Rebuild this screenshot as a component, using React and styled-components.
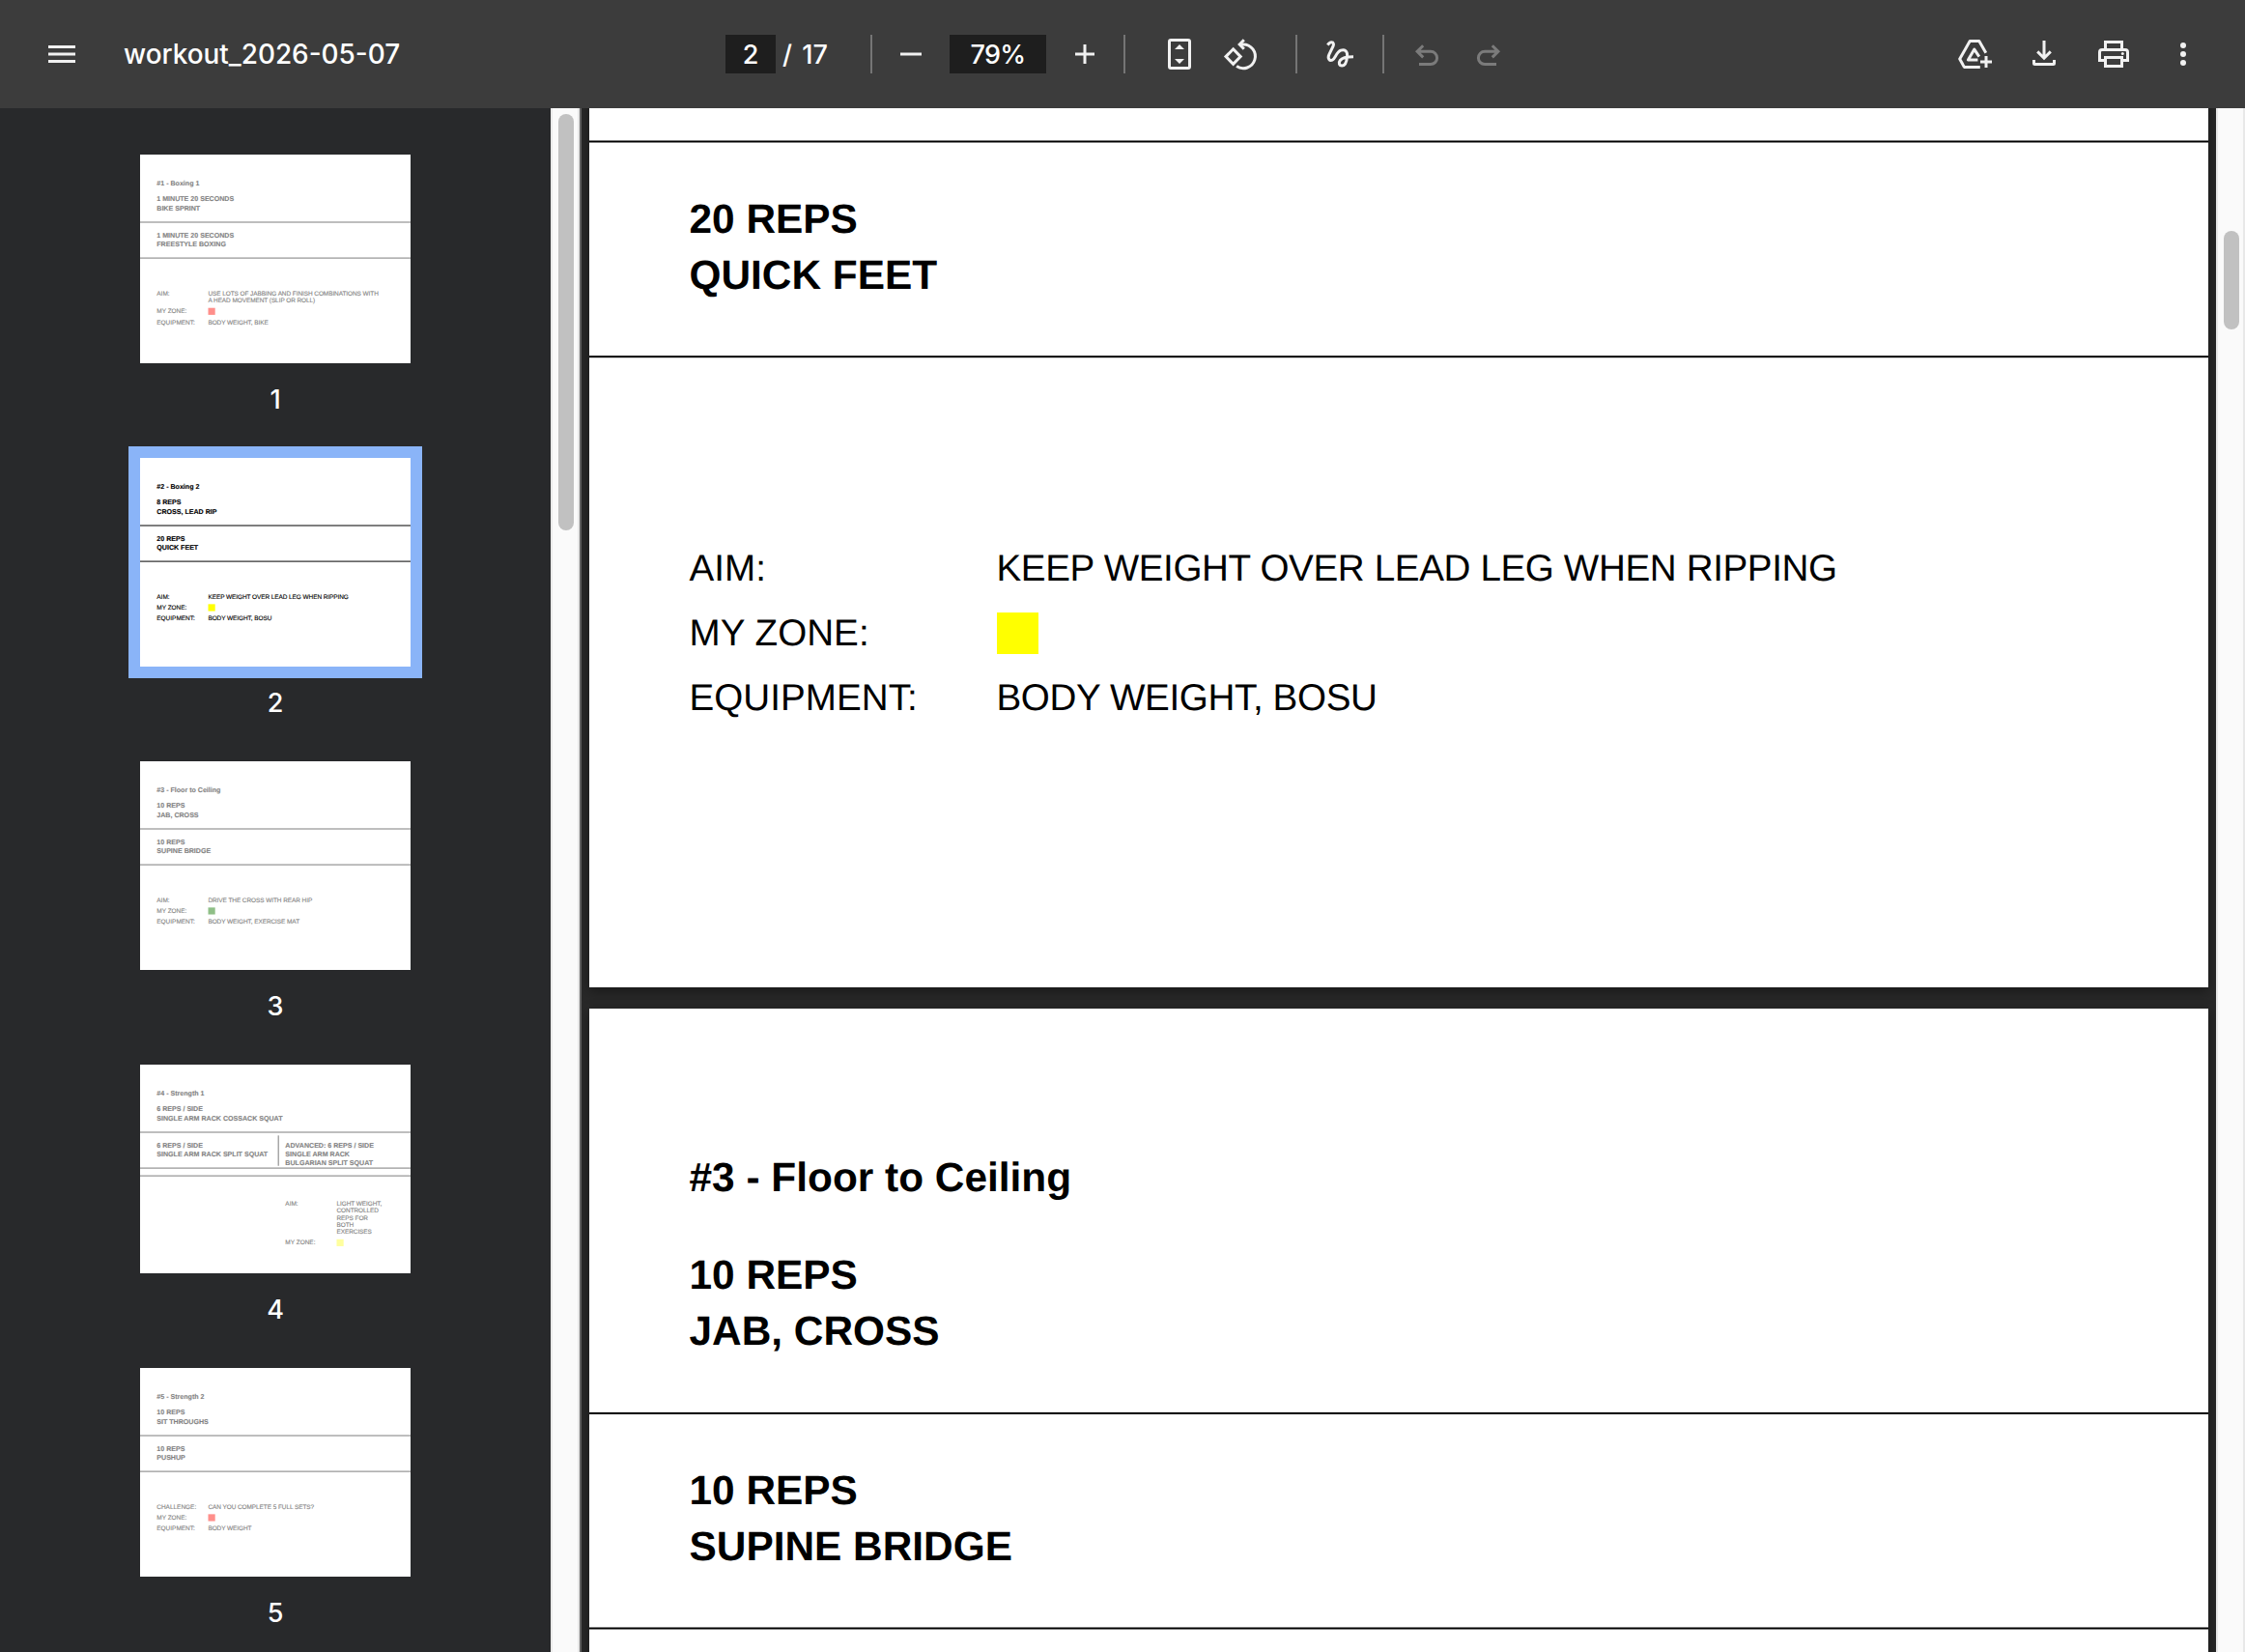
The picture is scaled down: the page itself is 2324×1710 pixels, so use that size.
import React from 'react';
import styled, { createGlobalStyle, css } from 'styled-components';

const PAGE_WIDTH = 1676;
const PAGE_HEIGHT = 1294;
const THUMB_WIDTH = 280;
const THUMB_SCALE = THUMB_WIDTH / PAGE_WIDTH;

const colors = {
  toolbar: '#3c3c3c',
  field: '#1e1e1e',
  sidebar: '#28292b',
  viewer: '#282828',
  active: '#8ab4f8',
  icon: '#f1f1f1',
  iconDisabled: '#7b7b7b',
};

const slides = [
  {
    title: '#1 - Boxing 1',
    main: { reps: '1 MINUTE 20 SECONDS', name: ['BIKE SPRINT'] },
    columns: [{ reps: '1 MINUTE 20 SECONDS', name: ['FREESTYLE BOXING'] }],
    details: [
      { label: 'AIM:', lines: ['USE LOTS OF JABBING AND FINISH COMBINATIONS WITH', 'A HEAD MOVEMENT (SLIP OR ROLL)'] },
      { label: 'MY ZONE:', zone: '#ff2119' },
      { label: 'EQUIPMENT:', lines: ['BODY WEIGHT, BIKE'] },
    ],
  },
  {
    title: '#2 - Boxing 2',
    main: { reps: '8 REPS', name: ['CROSS, LEAD RIP'] },
    columns: [{ reps: '20 REPS', name: ['QUICK FEET'] }],
    details: [
      { label: 'AIM:', lines: ['KEEP WEIGHT OVER LEAD LEG WHEN RIPPING'] },
      { label: 'MY ZONE:', zone: '#ffff00' },
      { label: 'EQUIPMENT:', lines: ['BODY WEIGHT, BOSU'] },
    ],
  },
  {
    title: '#3 - Floor to Ceiling',
    main: { reps: '10 REPS', name: ['JAB, CROSS'] },
    columns: [{ reps: '10 REPS', name: ['SUPINE BRIDGE'] }],
    details: [
      { label: 'AIM:', lines: ['DRIVE THE CROSS WITH REAR HIP'] },
      { label: 'MY ZONE:', zone: '#218111' },
      { label: 'EQUIPMENT:', lines: ['BODY WEIGHT, EXERCISE MAT'] },
    ],
  },
  {
    title: '#4 - Strength 1',
    main: { reps: '6 REPS / SIDE', name: ['SINGLE ARM RACK COSSACK SQUAT'] },
    columns: [
      { reps: '6 REPS / SIDE', name: ['SINGLE ARM RACK SPLIT SQUAT'] },
      { reps: 'ADVANCED: 6 REPS / SIDE', name: ['SINGLE ARM RACK', 'BULGARIAN SPLIT SQUAT'] },
    ],
    details: [
      { label: 'AIM:', lines: ['LIGHT WEIGHT,', 'CONTROLLED', 'REPS FOR', 'BOTH', 'EXERCISES'] },
      { label: 'MY ZONE:', zone: '#ffff3f' },
    ],
  },
  {
    title: '#5 - Strength 2',
    main: { reps: '10 REPS', name: ['SIT THROUGHS'] },
    columns: [{ reps: '10 REPS', name: ['PUSHUP'] }],
    details: [
      { label: 'CHALLENGE:', lines: ['CAN YOU COMPLETE 5 FULL SETS?'] },
      { label: 'MY ZONE:', zone: '#ff2119' },
      { label: 'EQUIPMENT:', lines: ['BODY WEIGHT'] },
    ],
  },
];

/* ---------- icons, all on a 40px grid ---------- */

const Icon = styled.svg.attrs({ viewBox: '0 0 40 40' })`
  display: block;
  width: 40px;
  height: 40px;
  fill: none;
  stroke: currentColor;
  stroke-width: 3;
`;

const MenuIcon = () => (
  <Icon>
    <path d="M6 12.5h28M6 20h28M6 27.5h28" />
  </Icon>
);

const MinusIcon = () => (
  <Icon>
    <path d="M9 20h22" />
  </Icon>
);

const PlusIcon = () => (
  <Icon>
    <path d="M10 20h20M20 10v20" />
  </Icon>
);

const FitIcon = () => (
  <Icon>
    <rect x="9.5" y="5.5" width="21" height="29" rx="1.5" />
    <path d="M15 15l5-5 5 5zM15 25l5 5 5-5z" fill="currentColor" stroke="none" />
  </Icon>
);

const RotateIcon = () => (
  <Icon>
    <path d="M11.6 14.8l7.6 7.8-7.6 7.8L4 22.6z" />
    <path d="M22.8 5.3L18.2 10l4.6 4.7" />
    <path d="M19.5 9.9H22a12.4 12.4 0 1 1-6.9 22.7" />
  </Icon>
);

const DrawIcon = () => (
  <Icon>
    <path d="M8.4 10.6C9.4 9 10.8 7.8 12.4 7.8c2.2 0 2.5 2 1.6 4.2L9.8 20.6c-1.8 4 .6 6.8 3.4 5.6 3-1.3 4-8.2 8.8-10 4-1.4 7 .6 6.6 5.6-.4 5.6-2 10.2-5.4 10.2-3.2 0-3.5-3.3-1.9-5.5 2.1-2.9 5.7-3.8 13.7-3.8" />
  </Icon>
);

const UndoIcon = () => (
  <Icon>
    <path d="M16.2 11.2L10.1 17.3l6.1 6.1M10.1 17.3H24a6.6 6.6 0 0 1 0 13.2H12" />
  </Icon>
);

const RedoIcon = () => (
  <Icon>
    <path d="M23.8 11.2l6.1 6.1-6.1 6.1M29.9 17.3H16a6.6 6.6 0 0 0 0 13.2h12" />
  </Icon>
);

const DriveIcon = () => (
  <Icon strokeLinejoin="round">
    <path d="M31.8 18.8L24.8 6.6h-9.6L4.7 25l4.6 8.4h16.5" />
    <path d="M24.8 22.6l-5-7.5-6.4 10.8h10" />
    <path d="M26 28h12M32 22v12" />
  </Icon>
);

const DownloadIcon = () => (
  <Icon>
    <path d="M20 6v18M13.2 17.4l6.8 6.8 6.8-6.8" />
    <path d="M9.5 26v3.5a1 1 0 0 0 1 1h19a1 1 0 0 0 1-1V26" />
  </Icon>
);

const PrintIcon = () => (
  <Icon>
    <path d="M11.5 15.5v-8h17v8" />
    <path d="M11.5 26.5h-6V18A2.5 2.5 0 0 1 8 15.5h24a2.5 2.5 0 0 1 2.5 2.5v8.5h-6" />
    <rect x="11.5" y="23.5" width="17" height="9" />
    <circle cx="29.3" cy="19.6" r="1.5" fill="currentColor" stroke="none" />
  </Icon>
);

const MoreIcon = () => (
  <Icon>
    <g fill="currentColor" stroke="none">
      <circle cx="20" cy="11" r="3" />
      <circle cx="20" cy="20" r="3" />
      <circle cx="20" cy="29" r="3" />
    </g>
  </Icon>
);

/* ---------- slide ---------- */

function Exercise({ reps, name }) {
  return (
    <ExerciseBlock>
      <BoldLine>{reps}</BoldLine>
      <div>
        {name.map((line) => (
          <BoldLine key={line}>{line}</BoldLine>
        ))}
      </div>
    </ExerciseBlock>
  );
}

function Slide({ slide, ruleWeight = 2, ruleShifts = [0, 0] }) {
  const split = slide.columns.length > 1;

  return (
    <SlideRoot>
      <SlideHeader>
        <BoldLine>{slide.title}</BoldLine>
        <Exercise {...slide.main} />
      </SlideHeader>
      <Rule $weight={ruleWeight} $shift={ruleShifts[0]} />
      <SlideColumns>
        {slide.columns.map((column, index) => (
          <React.Fragment key={column.reps + index}>
            {index > 0 && <ColumnDivider />}
            <SlideColumn $split={split} $first={index === 0}>
              <Exercise {...column} />
            </SlideColumn>
          </React.Fragment>
        ))}
      </SlideColumns>
      <Rule $weight={ruleWeight} $shift={ruleShifts[1]} />
      {split && (
        <>
          <SlideGap />
          <Rule $weight={ruleWeight} $shift={0} />
        </>
      )}
      <Details $split={split}>
        {slide.details.map((item) => (
          <DetailRow key={item.label}>
            <DetailLabel>{item.label}</DetailLabel>
            {item.zone ? (
              <Zone $color={item.zone} />
            ) : (
              <div>
                {item.lines.map((line) => (
                  <DetailText key={line}>{line}</DetailText>
                ))}
              </div>
            )}
          </DetailRow>
        ))}
      </Details>
    </SlideRoot>
  );
}

export default function App() {
  return (
    <>
      <GlobalStyle />
      <Shell>
        <Toolbar>
          <ToolbarStart>
            <IconButton aria-label="Menu">
              <MenuIcon />
            </IconButton>
            <DocumentTitle>workout_2026-05-07</DocumentTitle>
          </ToolbarStart>
          <ToolbarCenter>
            <Field $width={52}>2</Field>
            <PageCount>
              <span>/</span>
              <span>17</span>
            </PageCount>
            <Separator $before={44} $after={20} />
            <IconButton aria-label="Zoom out">
              <MinusIcon />
            </IconButton>
            <ZoomField $width={100}>79%</ZoomField>
            <IconButton aria-label="Zoom in">
              <PlusIcon />
            </IconButton>
            <Separator $before={20} $after={36} />
            <ButtonGroup $gap={24}>
              <IconButton aria-label="Fit to page">
                <FitIcon />
              </IconButton>
              <IconButton aria-label="Rotate">
                <RotateIcon />
              </IconButton>
            </ButtonGroup>
            <Separator $before={36} $after={23} />
            <IconButton aria-label="Draw">
              <DrawIcon />
            </IconButton>
            <Separator $before={25} $after={24} />
            <ButtonGroup $gap={24}>
              <IconButton disabled aria-label="Undo">
                <UndoIcon />
              </IconButton>
              <IconButton disabled aria-label="Redo">
                <RedoIcon />
              </IconButton>
            </ButtonGroup>
          </ToolbarCenter>
          <ToolbarEnd>
            <IconButton aria-label="Save to Drive">
              <DriveIcon />
            </IconButton>
            <IconButton aria-label="Download">
              <DownloadIcon />
            </IconButton>
            <IconButton aria-label="Print">
              <PrintIcon />
            </IconButton>
            <IconButton aria-label="More">
              <MoreIcon />
            </IconButton>
          </ToolbarEnd>
        </Toolbar>

        <Body>
          <Sidebar>
            {slides.map((slide, index) => (
              <Thumb key={slide.title}>
                <ThumbFrame $active={index === 1}>
                  <ThumbPage>
                    <ThumbScaler $active={index === 1}>
                      <Slide slide={slide} ruleWeight={6} />
                    </ThumbScaler>
                  </ThumbPage>
                </ThumbFrame>
                <ThumbNumber>{index + 1}</ThumbNumber>
              </Thumb>
            ))}
          </Sidebar>
          <Scrollbar $offset={6}>
            <ScrollThumb $height={431} />
          </Scrollbar>
          <Resizer />
          <Viewer>
            <Page>
              <Slide slide={slides[1]} ruleShifts={[-0.5, 0.2]} />
            </Page>
            <Page>
              <Slide slide={slides[2]} ruleShifts={[-0.1, 0.5]} />
            </Page>
          </Viewer>
          <Scrollbar $offset={127}>
            <ScrollThumb $height={102} />
          </Scrollbar>
        </Body>
      </Shell>
    </>
  );
}

const GlobalStyle = createGlobalStyle`
  *, *::before, *::after {
    box-sizing: border-box;
  }

  body {
    margin: 0;
    overflow: hidden;
    background: ${colors.viewer};
    font-family: Inter, Roboto, sans-serif;
  }
`;

const Shell = styled.div`
  display: flex;
  flex-direction: column;
  height: 100vh;
  overflow: hidden;
`;

const Toolbar = styled.header`
  display: flex;
  align-items: center;
  flex: none;
  height: 112px;
  background: ${colors.toolbar};
  color: #fff;
  font-size: 27px;
  font-weight: 500;
`;

const ToolbarStart = styled.div`
  display: flex;
  align-items: center;
  flex: none;
  gap: 44px;
  width: 751px;
  padding-left: 44px;
`;

const ToolbarCenter = styled.div`
  display: flex;
  align-items: center;
`;

const ToolbarEnd = styled.div`
  display: flex;
  gap: 32px;
  margin-left: auto;
  padding-right: 44px;
`;

const DocumentTitle = styled.span`
  font-size: 27.9px;
  line-height: 40px;
`;

const IconButton = styled.button`
  flex: none;
  padding: 0;
  border: 0;
  background: none;
  color: ${colors.icon};

  &:disabled {
    color: ${colors.iconDisabled};
  }
`;

const ButtonGroup = styled.div`
  display: flex;
  gap: ${(props) => props.$gap}px;
`;

const Field = styled.div`
  width: ${(props) => props.$width}px;
  height: 40px;
  background: ${colors.field};
  line-height: 41px;
  text-align: center;
`;

const ZoomField = styled(Field)`
  margin: 0 20px;
  letter-spacing: -0.6px;
`;

const PageCount = styled.div`
  display: flex;
  justify-content: space-between;
  width: 54px;
  padding-left: 7px;
  line-height: 41px;
`;

const Separator = styled.div`
  width: 2px;
  height: 40px;
  margin: 0 ${(props) => props.$after}px 0 ${(props) => props.$before}px;
  background: #757575;
`;

const Body = styled.div`
  display: flex;
  flex: 1;
  min-height: 0;
`;

const Sidebar = styled.aside`
  display: flex;
  flex-direction: column;
  align-items: center;
  flex: none;
  width: 570px;
  padding-top: 36px;
  overflow: hidden;
  background: ${colors.sidebar};
`;

const Thumb = styled.div`
  flex: none;
  height: 314px;
`;

const ThumbFrame = styled.div`
  padding: 12px;
  background: ${(props) => (props.$active ? colors.active : 'transparent')};
`;

const ThumbPage = styled.div`
  width: ${THUMB_WIDTH}px;
  height: 216px;
  overflow: hidden;
  background: #fff;
`;

const ThumbScaler = styled.div`
  width: ${PAGE_WIDTH}px;
  transform: scale(${THUMB_SCALE});
  transform-origin: 0 0;
  opacity: ${(props) => (props.$active ? 1 : 0.5)};
  -webkit-text-stroke: 0.8px #000;
`;

const ThumbNumber = styled.div`
  color: #fff;
  font-size: 27px;
  font-weight: 500;
  line-height: 52px;
  text-align: center;
`;

const Scrollbar = styled.div`
  flex: none;
  width: 30px;
  padding: ${(props) => props.$offset}px 6px 0;
  border: solid #e8e8e8;
  border-width: 0 2px;
  background: #fafafa;
`;

const ScrollThumb = styled.div`
  width: 16px;
  height: ${(props) => props.$height}px;
  border-radius: 8px;
  background: #c1c1c1;
`;

const Resizer = styled.div`
  flex: none;
  width: 2px;
  background: #5f5f5f;
`;

const Viewer = styled.main`
  flex: 1;
  padding: 0 8px;
  overflow: hidden;
  background: ${colors.viewer};
`;

// the document is scrolled to the middle of its second page
const Page = styled.section`
  width: ${PAGE_WIDTH}px;
  height: ${PAGE_HEIGHT}px;
  margin-bottom: 22px;
  box-shadow: 0 4px 12px rgba(0, 0, 0, 0.4);

  &:first-child {
    margin-top: -384px;
  }
`;

const SlideRoot = styled.div`
  width: ${PAGE_WIDTH}px;
  height: ${PAGE_HEIGHT}px;
  overflow: hidden;
  background: #fff;
  color: #000;
  font-family: 'Liberation Sans', Arial, sans-serif;
  white-space: nowrap;
  text-rendering: geometricPrecision;
`;

const SlideHeader = styled.div`
  display: flex;
  flex-direction: column;
  gap: 51px;
  height: 419px;
  padding: 150px 0 0 103.5px;
`;

const BoldLine = styled.div`
  font-size: 42.4px;
  font-weight: 700;
  line-height: 50px;
`;

const ExerciseBlock = styled.div`
  display: flex;
  flex-direction: column;
  gap: 8px;
`;

const Rule = styled.div`
  height: ${(props) => props.$weight}px;
  margin: ${(props) => -props.$weight / 2}px 0;
  background: #000;
  ${(props) =>
    props.$shift !== 0 &&
    css`
      transform: translateY(${props.$shift}px);
    `}
`;

const SlideColumns = styled.div`
  display: flex;
  height: 222px;
`;

const SlideColumn = styled.div`
  flex: ${(props) => (props.$split && props.$first ? '0 0 854px' : '1')};
  padding: 55px 0 0 ${(props) => (props.$first ? '103.5px' : '40px')};
`;

const ColumnDivider = styled.div`
  width: 6px;
  height: 188px;
  margin-top: 20px;
  background: #000;
`;

const SlideGap = styled.div`
  height: 48px;
`;

const Details = styled.div`
  display: flex;
  flex-direction: column;
  gap: 23px;
  padding: ${(props) => (props.$split ? '150px 0 0 900px' : '198px 0 0 103.5px')};
  font-size: 38.6px;
  line-height: 44px;
`;

const DetailRow = styled.div`
  display: flex;
`;

const DetailLabel = styled.div`
  flex: none;
  width: 318px;
  letter-spacing: 0.05px;
`;

const DetailText = styled.div`
  height: 44px;
  letter-spacing: -0.36px;
`;

const Zone = styled.div`
  width: 43px;
  height: 43px;
  margin-bottom: 1px;
  background: ${(props) => props.$color};
`;
